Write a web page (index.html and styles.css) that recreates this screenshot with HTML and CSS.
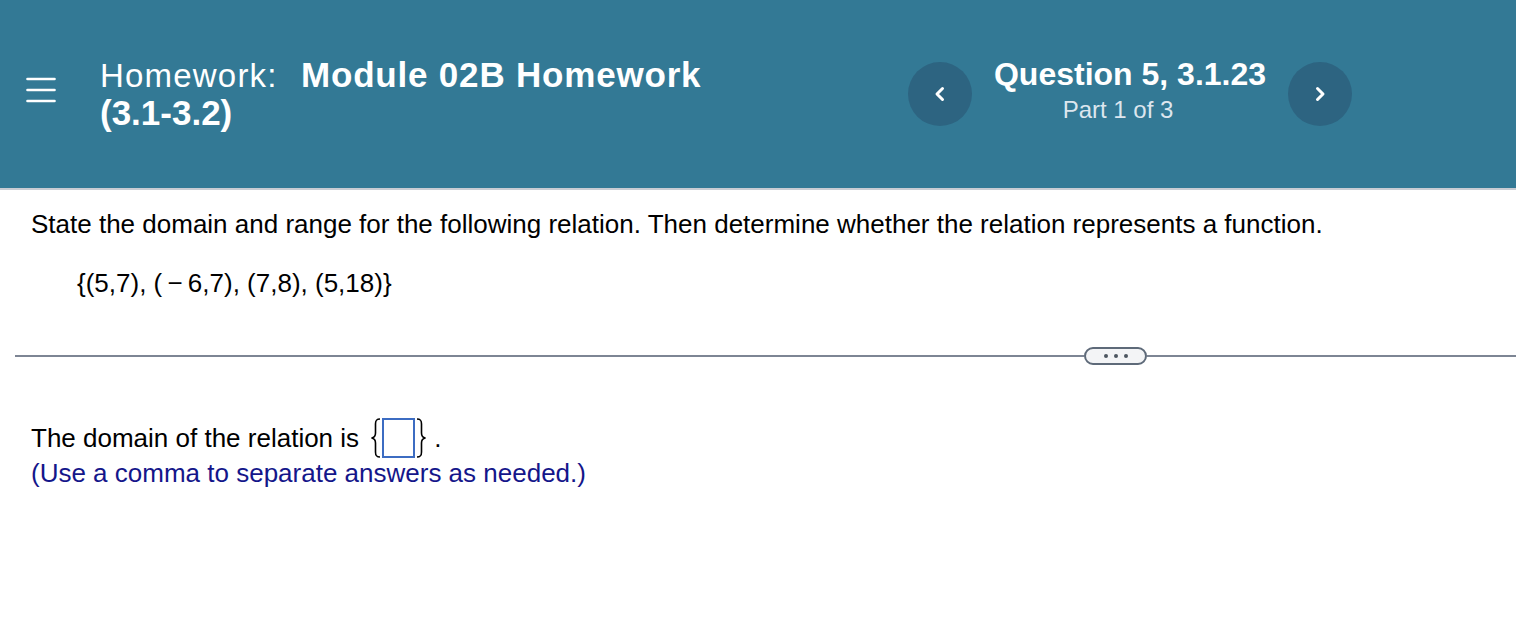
FILE: index.html
```html
<!DOCTYPE html>
<html>
<head>
<meta charset="utf-8">
<link rel="stylesheet" href="styles.css">
</head>
<body>
<header class="header">
  <button class="menu" aria-label="menu">
    <svg width="30" height="26" viewBox="0 0 30 26"><g stroke="#fff" stroke-width="2.6" stroke-linecap="round"><line x1="1.5" y1="2" x2="28.5" y2="2"/><line x1="1.5" y1="13" x2="28.5" y2="13"/><line x1="1.5" y1="24" x2="28.5" y2="24"/></g></svg>
  </button>
  <h1 class="title"><span class="title-light">Homework:</span> <span class="title-bold">Module 02B Homework <span class="nowrap">(3.1-3.2)</span></span></h1>
  <nav class="nav">
    <button class="circle" aria-label="previous">
      <svg width="12" height="16" viewBox="0 0 12 16"><polyline points="8.5,2.5 3,8 8.5,13.5" fill="none" stroke="#fff" stroke-width="3" stroke-linecap="round" stroke-linejoin="round"/></svg>
    </button>
    <div class="qinfo">
      <div class="qnum">Question 5, 3.1.23</div>
      <div class="qpart">Part 1 of 3</div>
    </div>
    <button class="circle" aria-label="next">
      <svg width="12" height="16" viewBox="0 0 12 16"><polyline points="3.5,2.5 9,8 3.5,13.5" fill="none" stroke="#fff" stroke-width="3" stroke-linecap="round" stroke-linejoin="round"/></svg>
    </button>
  </nav>
</header>
<main class="content">
  <p class="prompt">State the domain and range for the following relation. Then determine whether the relation represents a function.</p>
  <p class="relation">{(5,7), (&thinsp;&minus;&thinsp;6,7), (7,8), (5,18)}</p>
  <div class="divider">
    <span class="line line-left"></span>
    <span class="pill"><i></i><i></i><i></i></span>
    <span class="line"></span>
  </div>
  <div class="answer"><span class="answer-text">The domain of the relation is </span><span class="setbox"><svg class="brace" width="12" height="40" viewBox="0 0 12 40"><path d="M10 1 C6 1 5.5 3 5.5 6 L5.5 15 C5.5 18 4.5 19.5 1.5 20 C4.5 20.5 5.5 22 5.5 25 L5.5 34 C5.5 37 6 39 10 39" fill="none" stroke="#000" stroke-width="1.6"/></svg><span class="input"></span><svg class="brace" width="12" height="40" viewBox="0 0 12 40"><path d="M2 1 C6 1 6.5 3 6.5 6 L6.5 15 C6.5 18 7.5 19.5 10.5 20 C7.5 20.5 6.5 22 6.5 25 L6.5 34 C6.5 37 6 39 2 39" fill="none" stroke="#000" stroke-width="1.6"/></svg></span><span class="answer-text">.</span></div>
  <p class="hint">(Use a comma to separate answers as needed.)</p>
</main>
</body>
</html>
```
FILE: styles.css
```css
* { box-sizing: border-box; }
html, body { margin: 0; padding: 0; background: #fff; }
body { font-family: "Liberation Sans", Arial, sans-serif; color: #000; }

.header {
  height: 190px;
  background: #337995;
  border-bottom: 2px solid #c9ccd3;
  display: flex;
  align-items: flex-start;
  padding: 56px 164px 0 26px;
}
.menu {
  background: none; border: 0; padding: 0; margin: 21px 0 0 0;
  width: 30px; height: 26px; display: block;
}
.menu svg { display: block; }
.title {
  margin: 0 0 0 44px;
  width: 640px;
  font-size: 33px;
  line-height: 37px;
  letter-spacing: 1.2px;
  color: #fff;
  font-weight: 400;
}
.title-light { margin-right: 13px; }
.title-bold { font-weight: 700; font-size: 35px; letter-spacing: 0.8px; }
.nowrap { white-space: nowrap; letter-spacing: 0; }
.nav {
  margin-left: auto;
  display: flex;
  align-items: flex-start;
}
.circle {
  width: 64px; height: 64px; border-radius: 50%;
  background: #2d6481; border: 0; padding: 0; margin-top: 6px;
  display: flex; align-items: center; justify-content: center;
}
.circle svg { display: block; }
.qinfo {
  width: 316px;
  text-align: center;
  color: #fff;
}
.qnum { font-size: 32px; font-weight: 700; line-height: 36px; }
.qpart { font-size: 24px; line-height: 35px; color: #dde6ee; padding-right: 24px; }

.content { padding: 19px 0 0 31px; }
.prompt { margin: 0; font-size: 26px; line-height: 30px; }
.relation { margin: 27px 0 0 46px; font-size: 26px; line-height: 34px; }
.divider {
  display: flex; align-items: center;
  height: 19px;
  margin: 46px 0 0 -16px;
}
.divider .line { height: 2px; background: #7d8594; flex: 1; }
.divider .line-left { flex: 0 0 1069px; }
.pill {
  width: 63px; height: 18px; border: 2px solid #5e6a79; border-radius: 9px;
  background: #f3f4f6; display: flex; align-items: center; justify-content: center; gap: 6px;
}
.pill i { width: 4px; height: 4px; border-radius: 50%; background: #4d5560; display: block; }
.answer { margin: 53px 0 0 0; font-size: 26px; line-height: 40px; display: flex; align-items: center; }
.answer-text { white-space: pre; }
.setbox { display: flex; align-items: center; margin-left: 4px; margin-right: 7px; }
.brace { display: block; }
.input { width: 33px; height: 40px; border: 2px solid #3c6cc2; display: block; }
.hint { margin: -1px 0 0 0; font-size: 26px; line-height: 32px; color: #14168a; }
```
